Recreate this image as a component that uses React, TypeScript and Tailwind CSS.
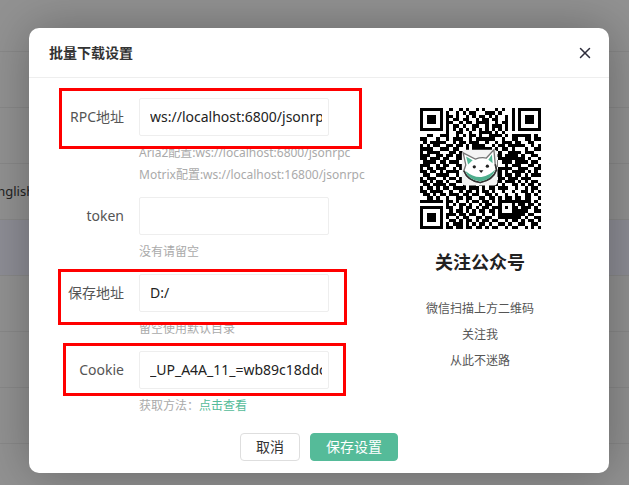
import React from 'react';
import { X } from 'lucide-react';

const QR_ROWS = [
  '1111111001001010010100010100101111111',
  '1000001010010101100011101000101000001',
  '1011101011010010101101010010101011101',
  '1011101010110110010110110010101011101',
  '1011101011001011011110010110101011101',
  '1000001010110100110010111010101000001',
  '1111111010101010101010101010101111111',
  '0000000010011001001111010100000000000',
  '0011001110010101101001111010111111010',
  '1100010010111001011111100100110011011',
  '0101111100101101110010010111011001100',
  '1010110011011010111100101101111100101',
  '1111001110110010111111010110100010011',
  '1011110001101110000011101001111011100',
  '1110011011011010000001011011110100110',
  '1101110110011100000000101111111101001',
  '0111101101110010000000010111011110110',
  '1110010110011100000000110010111001101',
  '1011011100101100000000101111001110011',
  '1101101011110010000000111010111101010',
  '0110011110010100000001011011011010111',
  '1011100101101110000011101101110111000',
  '1101011010011011011001011011101010110',
  '0110111101100101101101110100110101101',
  '1011010110111101110101101110010010110',
  '1101111001001011010110100100100110101',
  '0110101101110110110011010010010011010',
  '0011010010011011001101101011011011001',
  '1111111011010010110110101111111111010',
  '0000000010101101001011001000101101101',
  '1111111011001011010110111010110111010',
  '1000001001011010101101101000111110011',
  '1011101011101101100100101111111101100',
  '1011101010010110011011001111111010011',
  '1011101001101011010110110010110101101',
  '1000001010111010101101001101001100110',
  '1111111011011011011010110010110010101',
];

function QrCode() {
  const modules = QR_ROWS.map((row, y) =>
    row
      .split('')
      .map((cell, x) => (cell === '1' ? `M${x} ${y}h1v1h-1z` : ''))
      .join(''),
  ).join('');
  return (
    <svg viewBox="0 0 37 37" className="size-[121px]" role="img" aria-label="公众号二维码">
      <path d={modules} fill="#000" shapeRendering="crispEdges" />
      <rect x="12.8" y="12.8" width="10.9" height="10.9" rx="1.2" fill="#f4f4f4" />
      <path
        d="M13.2 13.7 L16.9 15.6 Q18.7 15 20.3 15.3 L22.6 12.8 L23 17.2 L23.4 18.9 Q22.4 22 18.4 22.8 Q14.6 22.3 13.4 19.2 L14 17.4 Z"
        fill="#fff"
        stroke="#777"
        strokeWidth=".4"
      />
      <path d="M23 17.2 L23.4 18.9 Q22.4 22 18.4 22.8 Q14.6 22.3 13.4 19.2" fill="none" stroke="#333" strokeWidth=".5" />
      <path d="M14.1 14.8 L16.1 16 L14.7 17.3Z M22 14.2 L20.9 15.8 L22.2 16.9Z" fill="#55ba98" />
      <path d="M13.8 19.2 Q16.5 21.4 18.8 21.1 Q21.3 20.7 23 18.8 Q22 21.9 18.4 22.5 Q14.9 22.1 13.8 19.2Z" fill="#4eae8d" />
      <circle cx="16.6" cy="18" r=".5" fill="#222" />
      <circle cx="20.6" cy="17.8" r=".5" fill="#222" />
      <path d="M18 19h1.4l-.7.9z" fill="#222" />
    </svg>
  );
}

type FieldProps = {
  id: string;
  label: string;
  value?: string;
  mark?: string;
  children: React.ReactNode;
};

function Field({ id, label, value = '', mark, children }: FieldProps) {
  return (
    <div className="relative mb-[11px] flex">
      <label htmlFor={id} className="h-[38px] w-[110px] shrink-0 pr-[15px] text-right text-sm leading-[38px] text-[#555]">
        {label}
      </label>
      <div className="w-[190px] shrink-0">
        <input
          id={id}
          type="text"
          defaultValue={value}
          className="block h-[38px] w-full rounded-xs border border-[#eee] bg-white pr-1.5 pb-0.5 pl-2.5 text-sm text-[#222] outline-none"
        />
        <div className="mt-1.5 text-xs leading-[22px] whitespace-nowrap text-[#aaa]">{children}</div>
      </div>
      {mark && <span aria-hidden="true" className={`pointer-events-none absolute border-3 border-[#f00] ${mark}`} />}
    </div>
  );
}

const backgroundRows = ['', '', '', 'English', 'active', '', '', '', ''];

export default function App() {
  return (
    <div className="relative min-h-screen overflow-hidden bg-[#929292] pt-7 pr-5 pb-3 pl-[29px] font-['Noto_Sans','Noto_Sans_CJK_SC',sans-serif]">
      <div className="absolute inset-x-0 -top-1 text-sm text-[#222]">
        {backgroundRows.map((row, i) => (
          <div
            key={i}
            className={`flex h-14 items-center border-b border-[#898989] ${row === 'active' ? 'bg-[#8e8e96]' : ''}`}
          >
            {row === 'English' && <span className="-ml-2.5 text-[13px]">English</span>}
          </div>
        ))}
      </div>

      <section
        role="dialog"
        aria-labelledby="dialog-title"
        className="relative rounded-[10px] bg-white pb-3 shadow-[1px_1px_50px_rgba(0,0,0,0.3)]"
      >
        <header className="flex h-[50px] items-center justify-between border-b border-[#eee] pr-[15px] pl-5">
          <h1 id="dialog-title" className="text-sm font-bold text-[#333]">批量下载设置</h1>
          <button type="button" aria-label="关闭" className="text-[#2e2d3c]">
            <X size={18} strokeWidth={2} />
          </button>
        </header>

        <form onSubmit={(e) => e.preventDefault()}>
          <div className="flex pt-5">
            <div className="w-[322px] shrink-0">
              <Field id="rpc" label="RPC地址" value="ws://localhost:6800/jsonrpc" mark="-top-2.5 left-[30px] h-[61px] w-[303px]">
                <p>Aria2配置:ws://localhost:6800/jsonrpc</p>
                <p>Motrix配置:ws://localhost:16800/jsonrpc</p>
              </Field>
              <Field id="token" label="token">没有请留空</Field>
              <Field id="path" label="保存地址" value="D:/" mark="-top-[5px] left-[29px] h-14 w-[289px]">
                留空使用默认目录
              </Field>
              <Field id="cookie" label="Cookie" value="_UP_A4A_11_=wb89c18ddc" mark="-top-2 left-[34px] h-[53px] w-[283px]">
                获取方法：<a href="#cookie" className="text-[#55bb99]">点击查看</a>
              </Field>
            </div>

            <aside className="flex flex-1 flex-col items-center pt-2.5">
              <QrCode />
              <h2 className="mt-5 text-lg leading-[26px] font-bold text-[#222]">关注公众号</h2>
              <div className="mt-[21px] text-center text-xs leading-[26px] text-[#555]">
                <p>微信扫描上方二维码</p>
                <p>关注我</p>
                <p>从此不迷路</p>
              </div>
            </aside>
          </div>

          <div className="flex justify-center gap-2.5 pt-[5px] text-sm leading-[26px]">
            <button type="button" className="rounded border border-[#dedede] bg-white px-[15px] text-[#333]">取消</button>
            <button type="submit" className="rounded border border-[#55bb99] bg-[#55bb99] px-[15px] text-white">保存设置</button>
          </div>
        </form>
      </section>
    </div>
  );
}
